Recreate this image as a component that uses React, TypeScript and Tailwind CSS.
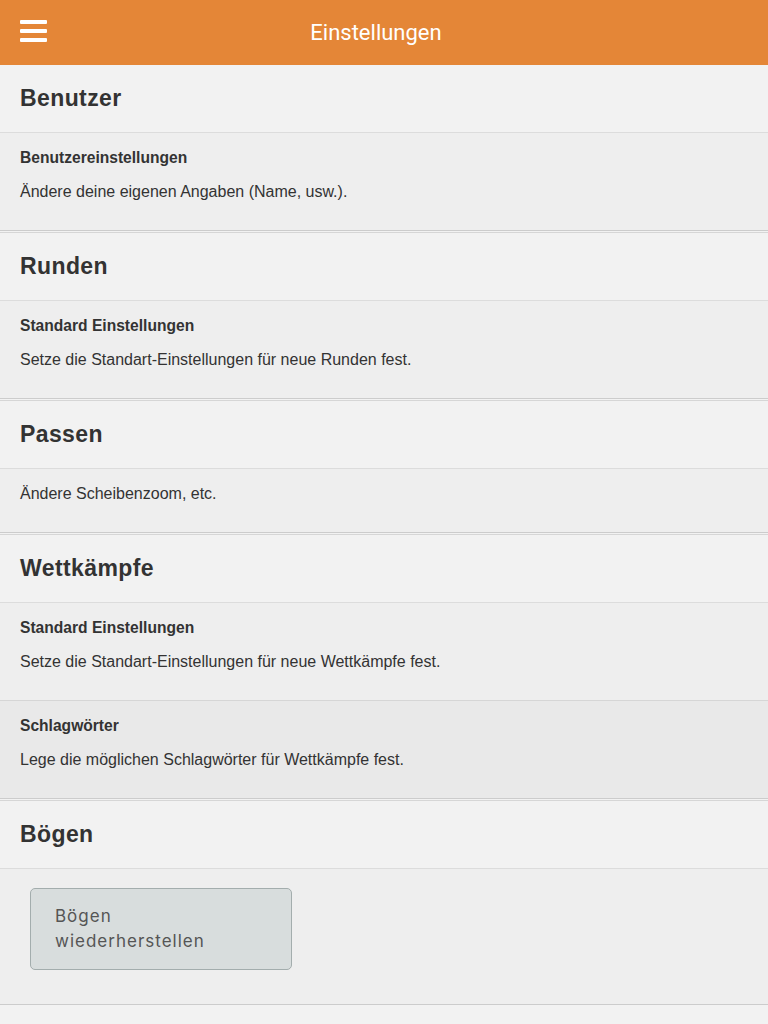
const sections: {
  title: string
  items: { title?: string; text: string; active?: boolean }[]
  button?: string
}[] = [
  {
    title: 'Benutzer',
    items: [{ title: 'Benutzereinstellungen', text: 'Ändere deine eigenen Angaben (Name, usw.).' }],
  },
  {
    title: 'Runden',
    items: [{ title: 'Standard Einstellungen', text: 'Setze die Standart-Einstellungen für neue Runden fest.' }],
  },
  {
    title: 'Passen',
    items: [{ text: 'Ändere Scheibenzoom, etc.' }],
  },
  {
    title: 'Wettkämpfe',
    items: [
      { title: 'Standard Einstellungen', text: 'Setze die Standart-Einstellungen für neue Wettkämpfe fest.' },
      { title: 'Schlagwörter', text: 'Lege die möglichen Schlagwörter für Wettkämpfe fest.', active: true },
    ],
  },
  {
    title: 'Bögen',
    items: [],
    button: 'Bögen wiederherstellen',
  },
]

function MenuIcon() {
  return (
    <svg width="28" height="24" viewBox="0 0 28 24" className="block">
      <rect x="0" y="0" width="27" height="4" rx="1" fill="#fff" />
      <rect x="0" y="9" width="27" height="4" rx="1" fill="#fff" />
      <rect x="0" y="18" width="27" height="4" rx="1" fill="#fff" />
    </svg>
  )
}

export default function App() {
  return (
    <div className="min-h-[1024px] w-full bg-[#f2f2f2] font-['Liberation_Sans',Arial,sans-serif] text-[#333]">
      <header className="relative flex h-[65px] items-center justify-center bg-[#e48637] pr-4">
        <button type="button" className="absolute left-5 top-5" aria-label="Menü">
          <MenuIcon />
        </button>
        <h1 className="font-['Roboto',sans-serif] text-[22px] font-normal text-white">Einstellungen</h1>
      </header>

      <div className="flex flex-col">
        {sections.map((section, i) => (
          <section
            key={section.title}
            className={
              i === 0
                ? 'mb-px border-b border-[#cccccc]'
                : 'mb-px border-y border-[#cccccc] [border-top-color:#d6d6d6]'
            }
          >
            <div className="flex h-[68px] items-center border-b border-[#dcdcdc] bg-[#f2f2f2] px-5">
              <h2 className="text-[23px] font-bold tracking-[0.4px]">{section.title}</h2>
            </div>
            {section.items.map((item, j) => (
              <div
                key={j}
                className={
                  (item.active ? 'bg-[#e9e9e9]' : 'bg-[#eeeeee]') +
                  (j < section.items.length - 1 ? ' border-b border-[#d6d6d6]' : '') +
                  ' px-5 pt-[15px] pb-[28px]'
                }
              >
                {item.title ? (
                  <h3 className="mb-[14px] text-[15.6px] font-bold leading-5">{item.title}</h3>
                ) : null}
                <p className="text-[16px] leading-5">{item.text}</p>
              </div>
            ))}
            {section.button ? (
              <div className="bg-[#eeeeee] px-[30px] pt-[19px] pb-[34px]">
                <button
                  type="button"
                  className="flex h-[82px] w-[262px] flex-col justify-center rounded-[5px] border border-[#a3adad] bg-[#d8dddd] px-6 text-left font-['Inter',sans-serif] text-[17px] leading-[25px] tracking-[1px] text-[#555]"
                >
                  <span>Bögen</span>
                  <span>wiederherstellen</span>
                </button>
              </div>
            ) : null}
          </section>
        ))}
      </div>
    </div>
  )
}
